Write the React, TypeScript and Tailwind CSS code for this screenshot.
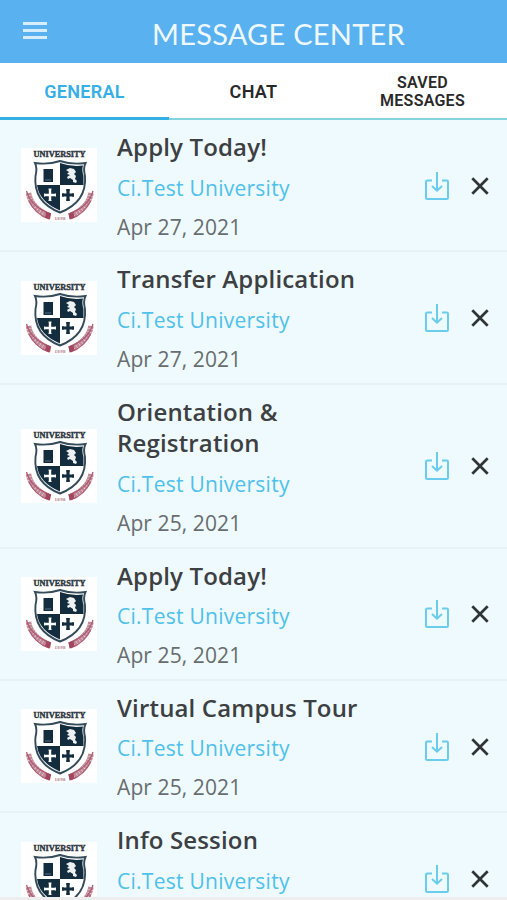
const messages = [
  { title: 'Apply Today!', date: 'Apr 27, 2021', height: 'h-[132.4px]' },
  { title: 'Transfer Application', date: 'Apr 27, 2021', height: 'h-[132.4px]' },
  { title: 'Orientation & Registration', date: 'Apr 25, 2021', height: 'h-[163.8px]' },
  { title: 'Apply Today!', date: 'Apr 25, 2021', height: 'h-[132.4px]' },
  { title: 'Virtual Campus Tour', date: 'Apr 25, 2021', height: 'h-[132.4px]' },
  { title: 'Info Session', date: '', height: 'h-[132.4px]' },
];

function Laurel() {
  return (
    <g fill="none">
      <path d="M7.500 45Q10 60 29 68" stroke="#c18a99" strokeWidth="5.500" strokeDasharray="2.800 .4" />
      <path d="M5.500 43Q10 59 30 66" stroke="#ad5c73" strokeWidth="1.300" />
      <path d="M8 53Q14 66 28 71" stroke="#ad5c73" strokeWidth="1.300" />
      <path d="m25 64 5 1.500-1 6-5-2z" fill="#a3465f" />
    </g>
  );
}

function Crest() {
  return (
    <svg viewBox="0 0 76 74" className="h-[74px] w-[76px] shrink-0 bg-white">
      <text x="12.500" y="9" textLength="52" lengthAdjust="spacingAndGlyphs" fontFamily="Liberation Serif, serif" fontWeight="700" fontSize="8.500" fill="#303943" stroke="#303943" strokeWidth=".45">UNIVERSITY</text>
      <Laurel />
      <g transform="translate(77.500 0) scale(-1 1)"><Laurel /></g>
      <path d="M14 15Q27 17 39 13Q51 17 64.500 15Q62 20 64 28Q66 54 39 64.500Q12 54 14.500 28Q16.500 20 14 15Z" fill="white" stroke="#344b5a" strokeWidth="1.900" />
      <path d="M39 15Q50 19 62 17.500Q60.500 22 62.500 28V37H39Z" fill="#132c3e" />
      <path d="M16 37H39V62.500Q18 53.500 16 37Z" fill="#132c3e" />
      <path d="M22.500 21h9.500v13h-9.500z" fill="#132c3e" />
      <path d="M24 32h6" stroke="#718491" strokeWidth=".8" />
      <path d="m45 22 4-2 4 1 2 3-2 2 2 2-1 3 2 2-1 2-3-1 0-2-3-2-2 1-1-2 3-2-3-1 2-2z" fill="#edf1f2" />
      <path d="M29 41v11.500M23.500 47h11" stroke="white" strokeWidth="2.400" />
      <path d="M27.500 41h3M27.500 52.500h3M23.500 45.500v3M34.500 45.500v3" stroke="white" strokeWidth=".9" />
      <path d="M47 41v12M41 47h12" stroke="#132c3e" strokeWidth="3.200" />
      <path d="M45.300 42h3.400M45.300 52h3.400M42 45.300v3.400M52 45.300v3.400" stroke="#132c3e" strokeWidth="1.400" />
      <text x="33.500" y="72" textLength="11" fontFamily="Liberation Serif, serif" fontWeight="700" fontSize="5" fill="#b3788a">1898</text>
    </svg>
  );
}

function SaveIcon() {
  return (
    <svg viewBox="0 0 26 30" className="h-[30px] w-[26px]" fill="none" stroke="#6bcdec" strokeWidth="2">
      <path d="M8 9.500H3.200Q2 9.500 2 10.700V26.800Q2 28 3.200 28H22.800Q24 28 24 26.800V10.700Q24 9.500 22.800 9.500H18" />
      <path d="M13 1v18.500M8 15l5 4.700 5-4.700" />
    </svg>
  );
}

function CloseIcon() {
  return (
    <svg viewBox="0 0 18 18" className="h-[18px] w-[18px]" fill="none" stroke="#303437" strokeWidth="2.700">
      <path d="m1.300 1.300 15.400 15.400M16.700 1.300 1.300 16.700" />
    </svg>
  );
}

export default function App() {
  return (
    <div className="flex h-[900px] w-[507px] flex-col overflow-hidden bg-[#eefafd] font-['Open_Sans',sans-serif]">
      <header className="flex h-[62.500px] shrink-0 items-start bg-[#5ab1ef]">
        <button aria-label="Menu" className="ml-[23px] mt-[22px] flex w-6 flex-col gap-1">
          <span className="h-[3px] w-full bg-[#d6edfc]" />
          <span className="h-[3px] w-full bg-[#d6edfc]" />
          <span className="h-[3px] w-full bg-[#d6edfc]" />
        </button>
        <h1 className="ml-[105px] mt-[16px] whitespace-nowrap font-['Lato',sans-serif] text-[29px] leading-9 tracking-[0.25px] text-[#edf8ff]">MESSAGE CENTER</h1>
      </header>
      <nav className="grid h-[57.500px] shrink-0 grid-cols-3 bg-white text-center font-['Roboto',sans-serif] font-semibold text-[#292929]">
        <button className="border-b-[3px] border-[#35b0e5] pt-[3px] text-[18px] tracking-[0.3px] text-[#35b0e5]">GENERAL</button>
        <button className="border-b-2 border-[#83d4df] pt-[2px] text-[18px] tracking-[0.3px]">CHAT</button>
        <button className="border-b-2 border-[#83d4df] pt-[3px] text-[16px] leading-[18px] tracking-[0.25px]">SAVED<br />MESSAGES</button>
      </nav>
      <main className="min-h-0 flex-1 overflow-hidden">
        {messages.map((message, index) => (
          <article key={index} className={`flex items-center border-b-2 border-[#e6f3f6] pl-[21px] ${message.height}`}>
            <Crest />
            <div className="ml-5 flex w-[270px] flex-col self-start pt-[11px]">
              <h2 className="text-[24px] font-semibold leading-[31.500px] tracking-[0.16px] text-[#3d4042]">{message.title}</h2>
              <p className="mt-[8px] text-[21px] font-[450] leading-[34px] tracking-[0.26px] text-[#4fc1ea]">Ci.Test University</p>
              {message.date && <p className="mt-[5px] text-[21px] font-[450] leading-[34px] tracking-[0.1px] text-[#686d6f]">{message.date}</p>}
            </div>
            <div className="ml-[37px] flex items-center gap-[21px] pt-[1px]">
              <button aria-label="Save message"><SaveIcon /></button>
              <button aria-label="Delete message"><CloseIcon /></button>
            </div>
          </article>
        ))}
      </main>
      <div className="h-[3px] shrink-0 bg-[#eeeeef]" />
    </div>
  );
}
